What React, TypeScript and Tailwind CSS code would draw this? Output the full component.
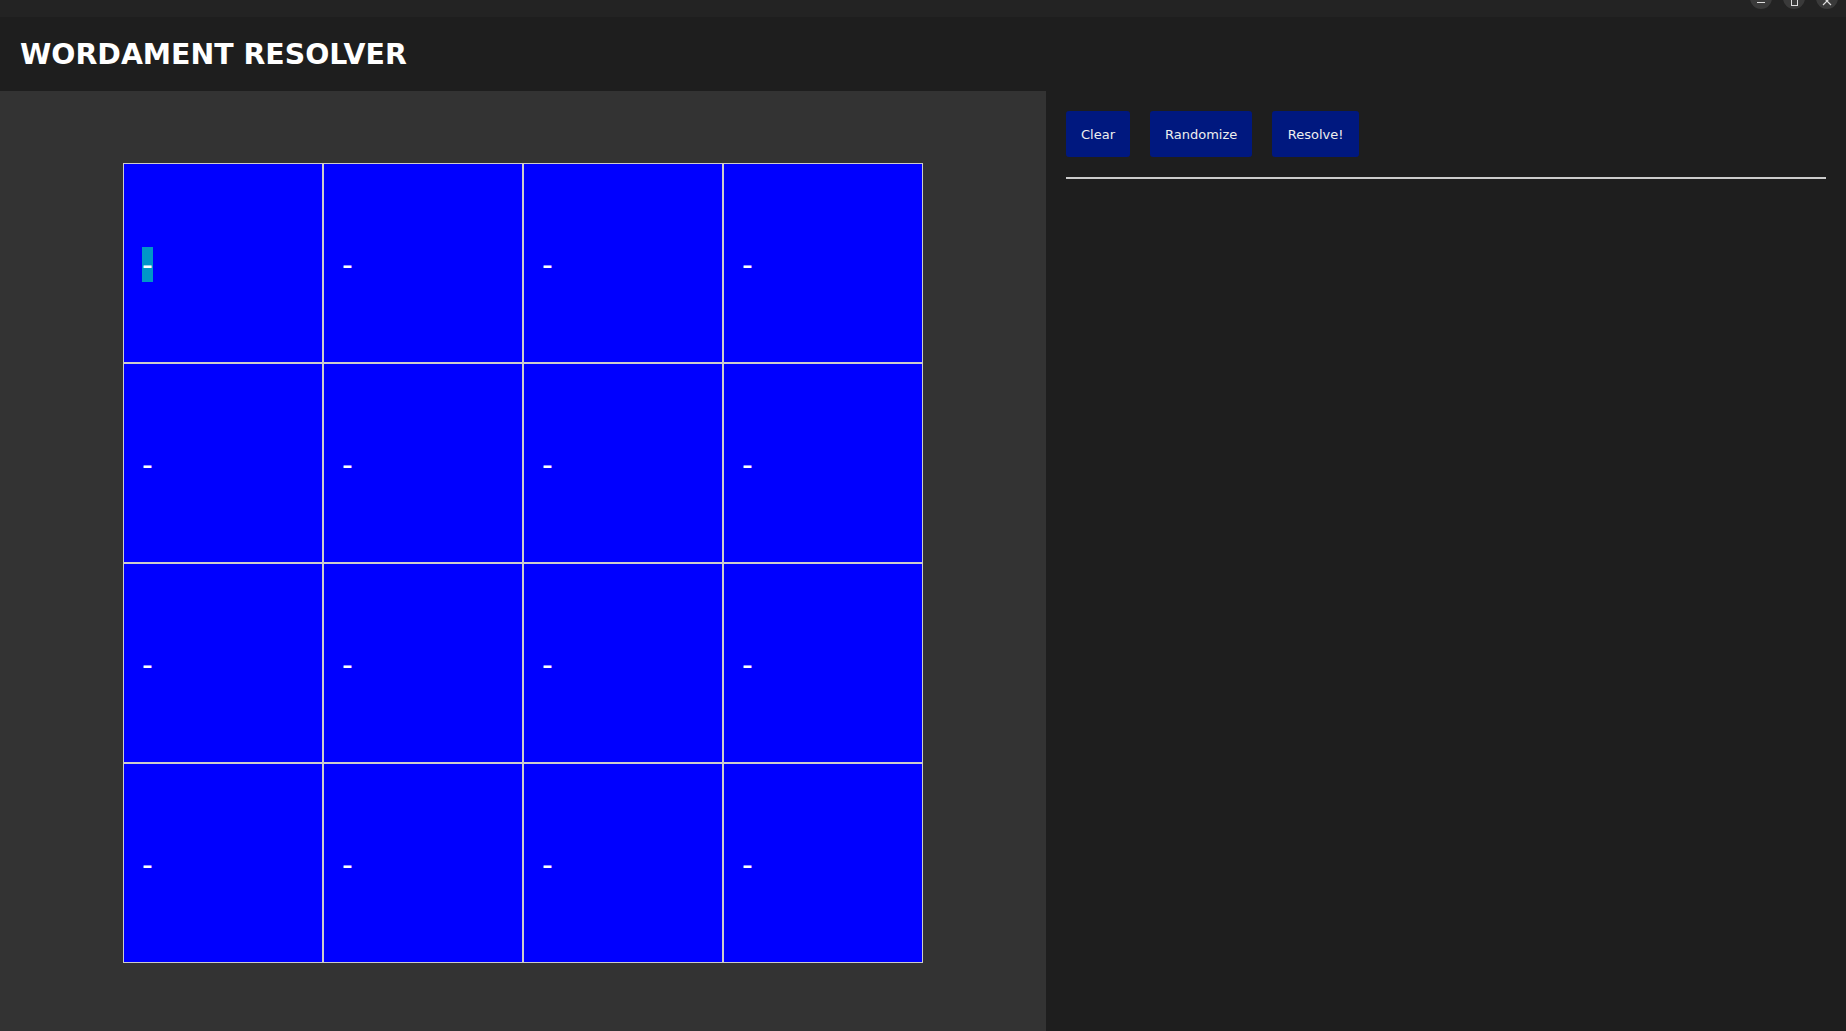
import React from 'react'

const cells = Array.from({ length: 16 }, (_, i) => i)

function WindowControls() {
  return (
    <div className="absolute right-[8px] top-[-13px] flex gap-[11px]">
      <div className="w-[22px] h-[22px] rounded-full bg-[#3a3a3a] flex items-center justify-center">
        <div className="mt-[8px] w-[8px] h-[1px] bg-[#ddd]" />
      </div>
      <div className="w-[22px] h-[22px] rounded-full bg-[#3a3a3a] flex items-center justify-center">
        <div className="mt-[8px] w-[7px] h-[7px] border border-[#ddd]" />
      </div>
      <div className="w-[22px] h-[22px] rounded-full bg-[#3a3a3a] flex items-center justify-center">
        <svg width="10" height="10" viewBox="0 0 10 10" className="mt-[6px]">
          <path d="M1 1 L9 9 M9 1 L1 9" stroke="#ddd" strokeWidth="1.2" />
        </svg>
      </div>
    </div>
  )
}

export default function App() {
  return (
    <div className="h-screen w-full flex flex-col bg-[#1e1e1e] overflow-hidden" style={{ fontFamily: '"DejaVu Sans", sans-serif' }}>
      <div className="relative h-[17px] bg-[#232323] shrink-0">
        <WindowControls />
      </div>
      <div className="h-[74px] shrink-0 flex items-center px-[20px] pt-[2px] bg-[#1e1e1e]">
        <h1 className="text-[28.4px] font-bold text-white leading-none">WORDAMENT RESOLVER</h1>
      </div>
      <div className="flex-1 flex min-h-0">
        <div className="w-[1046px] shrink-0 bg-[#333333] flex items-center justify-center pt-[4px]">
          <div className="grid grid-cols-4">
            {cells.map((i) => (
              <div key={i} className="w-[200px] h-[200px] border border-[#cccccc] bg-[#0000ff] flex items-center pl-[18px]">
                <span className={`mt-[2px] text-[30px] leading-[35px] text-white ${i === 0 ? 'bg-[#0096c8]' : ''}`}>-</span>
              </div>
            ))}
          </div>
        </div>
        <div className="flex-1 bg-[#1e1e1e] p-[20px]">
          <div className="flex gap-[20px]">
            <button className="h-[46px] px-[15px] pt-[1px] rounded-[3px] bg-[#00187f] text-[13px] text-[#eeeeee]">Clear</button>
            <button className="h-[46px] px-[15px] pt-[1px] rounded-[3px] bg-[#00187f] text-[13px] text-[#eeeeee]">Randomize</button>
            <button className="h-[46px] px-[15.5px] pt-[1px] rounded-[3px] bg-[#00187f] text-[13px] text-[#eeeeee]">Resolve!</button>
          </div>
          <div className="mt-[20px] h-[2px] bg-[#cccccc]" />
        </div>
      </div>
    </div>
  )
}
